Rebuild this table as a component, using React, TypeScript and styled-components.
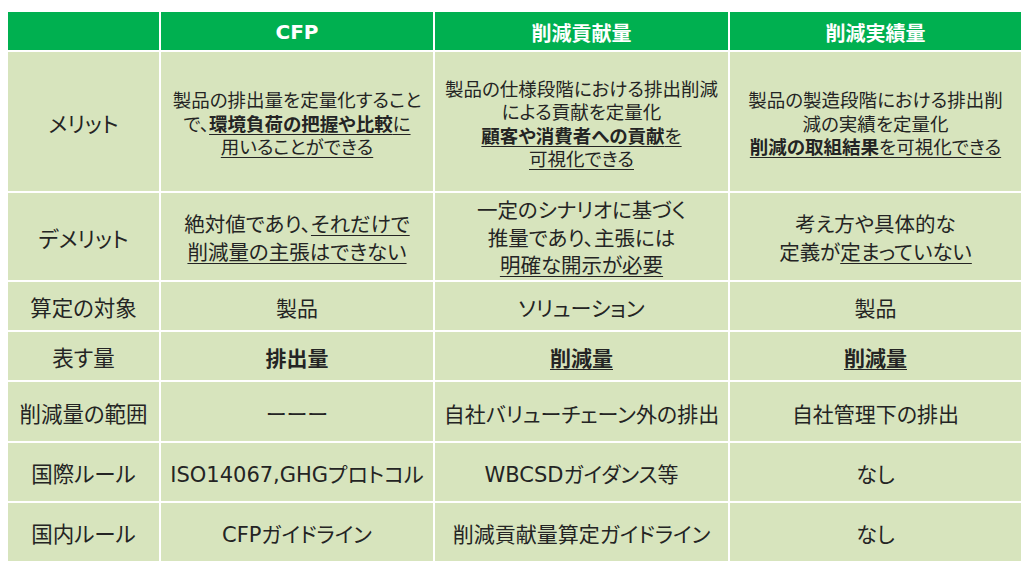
import React from "react";
import styled, { createGlobalStyle } from "styled-components";

const GlobalStyle = createGlobalStyle`
  html, body {
    margin: 0;
    padding: 0;
    background: #ffffff;
  }
`;

const Page = styled.div`
  width: 1024px;
  height: 576px;
  padding: 12px 0 0 8px;
  box-sizing: border-box;
  background: #ffffff;
  font-family: "DejaVu Sans", "Noto Sans CJK JP", sans-serif;
`;

const Table = styled.div`
  display: grid;
  grid-template-columns: 151px 272px 293px 291px;
  grid-template-rows: 38px 139px 87px 48px 48px 59px 58px 58px;
  gap: 2px;
  width: 1013px;
  background: #ffffff;
`;

const HeadCell = styled.div`
  display: flex;
  align-items: center;
  justify-content: center;
  background: #00b050;
  color: #ffffff;
  font-weight: 700;
  font-size: 20px;
  font-feature-settings: "palt";
  padding-top: 2px;
`;

const Cell = styled.div<{ $size: number; $lh: number }>`
  display: flex;
  align-items: center;
  justify-content: center;
  text-align: center;
  background: #d7e4bd;
  color: #242424;
  font-size: ${(p) => p.$size}px;
  line-height: ${(p) => p.$lh}px;
  font-feature-settings: "palt";
  white-space: nowrap;
  padding-top: 6px;
`;

const B = styled.b`
  font-weight: 700;
`;

const U = styled.span`
  text-decoration: underline;
  text-decoration-thickness: 1px;
  text-underline-offset: 3px;
`;

const headers = ["", "CFP", "削減貢献量", "削減実績量"];

type Row = { label: string; size: number; lh: number; cells: React.ReactNode[] };

const rows: Row[] = [
  {
    label: "メリット",
    size: 18.5,
    lh: 23.5,
    cells: [
      <>
        製品の排出量を定量化すること
        <br />
        で、
        <U>
          <B>環境負荷の把握や比較</B>に
        </U>
        <br />
        <U>用いることができる</U>
      </>,
      <>
        製品の仕様段階における排出削減
        <br />
        による貢献を定量化
        <br />
        <U>
          <B>顧客や消費者への貢献</B>を
        </U>
        <br />
        <U>可視化できる</U>
      </>,
      <>
        製品の製造段階における排出削
        <br />
        減の実績を定量化
        <br />
        <U>
          <B>削減の取組結果</B>を可視化できる
        </U>
      </>,
    ],
  },
  {
    label: "デメリット",
    size: 20.5,
    lh: 27.5,
    cells: [
      <>
        絶対値であり、<U>それだけで</U>
        <br />
        <U>削減量の主張はできない</U>
      </>,
      <>
        一定のシナリオに基づく
        <br />
        推量であり、主張には
        <br />
        <U>明確な開示が必要</U>
      </>,
      <>
        考え方や具体的な
        <br />
        定義が<U>定まっていない</U>
      </>,
    ],
  },
  { label: "算定の対象", size: 21, lh: 28, cells: ["製品", "ソリューション", "製品"] },
  {
    label: "表す量",
    size: 21,
    lh: 28,
    cells: [
      <B>排出量</B>,
      <U>
        <B>削減量</B>
      </U>,
      <U>
        <B>削減量</B>
      </U>,
    ],
  },
  {
    label: "削減量の範囲",
    size: 21,
    lh: 28,
    cells: ["ーーー", "自社バリューチェーン外の排出", "自社管理下の排出"],
  },
  {
    label: "国際ルール",
    size: 21,
    lh: 28,
    cells: ["ISO14067,GHGプロトコル", "WBCSDガイダンス等", "なし"],
  },
  {
    label: "国内ルール",
    size: 21,
    lh: 28,
    cells: ["CFPガイドライン", "削減貢献量算定ガイドライン", "なし"],
  },
];

export default function App() {
  return (
    <>
      <GlobalStyle />
      <Page>
        <Table>
          {headers.map((h, i) => (
            <HeadCell key={"h" + i}>{h}</HeadCell>
          ))}
          {rows.map((r) => (
            <React.Fragment key={r.label}>
              <Cell $size={21.5} $lh={28}>
                {r.label}
              </Cell>
              {r.cells.map((c, j) => (
                <Cell key={j} $size={r.size} $lh={r.lh}>
                  <div>{c}</div>
                </Cell>
              ))}
            </React.Fragment>
          ))}
        </Table>
      </Page>
    </>
  );
}
